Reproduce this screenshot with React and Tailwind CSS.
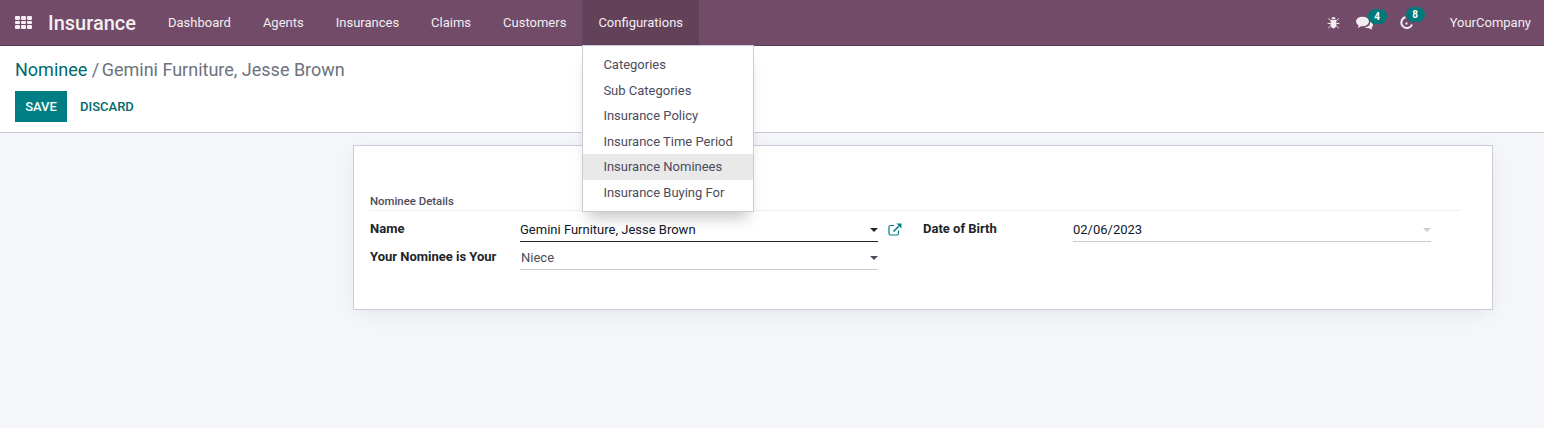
import React from "react";

const menus = ["Dashboard", "Agents", "Insurances", "Claims", "Customers"];
const dropdown = [
  "Categories",
  "Sub Categories",
  "Insurance Policy",
  "Insurance Time Period",
  "Insurance Nominees",
  "Insurance Buying For",
];

// Small caret used at the right of select fields
function Caret({ className }) {
  return <span className={`block w-0 h-0 border-x-[4px] border-x-transparent border-t-[4px] ${className}`} />;
}

function Badge({ children, className }) {
  return (
    <span className={`absolute flex items-center justify-center w-[19px] h-[15px] rounded-full bg-[#00797c] text-white text-[10px] font-bold ${className}`}>
      {children}
    </span>
  );
}

function NavBar() {
  return (
    <header className="relative z-20 flex items-center h-[46px] bg-[#714b67] border-b border-[#5a3c52] text-[#f3eef2] text-[13px]">
      {/* Apps icon */}
      <div className="grid grid-cols-3 gap-x-[1.5px] gap-y-[1px] ml-[15px] w-[17px]">
        {Array.from({ length: 9 }).map((_, i) => (
          <span key={i} className="h-[3.7px] w-[4.6px] rounded-[1px] bg-[#f3eef2]" />
        ))}
      </div>
      <span className="ml-[16px] mr-[16px] text-[20px] font-medium leading-none">Insurance</span>
      {menus.map((m) => (
        <span key={m} className="px-4 leading-[45px]">{m}</span>
      ))}
      {/* Configurations stays open */}
      <div className="relative">
        <span className="block px-4 leading-[45px] bg-[#634259]">Configurations</span>
        <div className="absolute left-0 top-[45px] w-[172px] h-[167px] py-[6px] bg-white border border-[#c9cbd6] shadow-[0_12px_14px_-6px_rgba(0,0,0,0.22)] text-[#4c4c5c]">
          {dropdown.map((d) => (
            <div key={d} className={`h-[25.6px] pl-[20px] leading-[25.6px] ${d === "Insurance Nominees" ? "bg-[#e9e9e9]" : ""}`}>
              {d}
            </div>
          ))}
        </div>
      </div>
      <div className="ml-auto flex items-center">
        {/* Bug icon */}
        <svg width="13" height="13" viewBox="0 0 13 13" fill="#f3eef2" className="mr-[17px]">
          <path d="M4.4 3.2a2.1 2.1 0 0 1 4.2 0z" />
          <path d="M3.6 4h5.8v5c0 2-1.3 3.2-2.9 3.4C4.9 12.2 3.6 11 3.6 9z" />
          <path d="M1.3 2.4l2.2 2.2M11.700 2.4L9.5 4.6M.6 7.500h3M12.4 7.500h-3M1.3 12l2.4-2.2M11.700 12L9.300 9.800" stroke="#f3eef2" strokeWidth="1" fill="none" />
        </svg>
        {/* Chat icon with badge */}
        <div className="relative w-[16px] h-[14px] mr-[27px] ml-[-1px]">
          <svg width="17" height="14" viewBox="0 0 17 14" fill="#f3eef2">
            <ellipse cx="6.500" cy="5.500" rx="6.500" ry="4.800" />
            <path d="M3 8.500L1.800 12 6.500 9.500z" />
            <path d="M14 5.500c1.800.8 3 2 3 3.500 0 1-.6 1.900-1.500 2.500l.8 2.300-3.300-1.600c-1.600.2-3.200-.1-4.300-.9 3.800-.2 5.800-2.700 5.300-5.800z" />
          </svg>
          <Badge className="left-[12px] top-[-7px]">4</Badge>
        </div>
        {/* Activity icon with badge */}
        <div className="relative w-[15px] h-[15px] mr-[36px]">
          <svg width="15" height="15" viewBox="0 0 15 15" fill="none" stroke="#f3eef2" strokeWidth="2">
            <path d="M6.500 2.200A5.500 5.500 0 1 0 13 9.500" />
            <path d="M6.500 8.500h2" />
          </svg>
          <Badge className="left-[7px] top-[-8px]">8</Badge>
        </div>
        <span className="mr-[13px]">YourCompany</span>
      </div>
    </header>
  );
}

function ControlPanel() {
  return (
    <div className="h-[87px] bg-white border-b border-[#c9cbd6] pl-[15px] pt-[12px]">
      <div className="text-[18px] leading-[24px] text-[#6c7280] whitespace-nowrap">
        <span className="text-[#00696c]">Nominee</span> <span className="mr-[-2px]">/</span> Gemini Furniture, Jesse Brown
      </div>
      <div className="flex items-center mt-[9px] text-[13px] font-medium">
        <button className="h-[31px] w-[52px] bg-[#017e84] text-white">SAVE</button>
        <button className="ml-[13px] text-[#00696c]">DISCARD</button>
      </div>
    </div>
  );
}

function Label({ children }) {
  return <div className="text-[13px] font-bold text-[#212529] leading-[20px]">{children}</div>;
}

function NomineeForm() {
  return (
    <div className="ml-[353px] mt-[12px] w-[1140px] h-[165px] bg-white border border-[#c9cbd6] shadow-[0_5px_20px_-5px_rgba(0,0,0,0.1)] pt-[47px] pl-[16px] pr-[31px]">
      <div className="h-[18px] border-b border-[#f0f0f3] text-[11.4px] font-medium leading-[16px] text-[#4c4c5c]">
        Nominee Details
      </div>
      <div className="flex mt-[8px]">
        {/* Left group */}
        <div className="w-[150px]">
          <div className="h-[28px]"><Label>Name</Label></div>
          <Label>Your Nominee is Your</Label>
        </div>
        <div className="w-[358px]">
          <div className="h-[23px] flex items-center justify-between border-b border-[#212529] text-[13px] text-[#111827]">
            <span>Gemini Furniture, Jesse Brown</span>
            <Caret className="border-t-[#212529]" />
          </div>
          <div className="mt-[5px] h-[23px] flex items-center justify-between border-b border-[#c9cbd6] text-[13px] text-[#4c4c5c] pl-[1px]">
            <span>Niece</span>
            <Caret className="border-t-[#4c4c5c]" />
          </div>
        </div>
        {/* External link icon */}
        <svg width="14" height="13" viewBox="0 0 14 13" fill="none" className="ml-[10px] mt-[4px]">
          <path d="M10.500 7.500v3a1.500 1.500 0 0 1-1.500 1.500H2.500A1.500 1.500 0 0 1 1 10.500V4a1.500 1.500 0 0 1 1.500-1.500H6" stroke="#017e84" strokeWidth="1.200" />
          <path d="M5.500 8.500L11 3" stroke="#017e84" strokeWidth="1.600" />
          <path d="M8.500 0.500H13.500V5.500z" fill="#017e84" />
        </svg>
        {/* Right group */}
        <div className="ml-[21px] w-[150px]"><Label>Date of Birth</Label></div>
        <div className="w-[358px] h-[23px] flex items-center justify-between border-b border-[#c9cbd6] text-[13px] text-[#111827]">
          <span>02/06/2023</span>
          <Caret className="border-t-[#c9cbd6]" />
        </div>
      </div>
    </div>
  );
}

export default function App() {
  return (
    <div className="h-[428px] bg-[#f5f6fa] overflow-hidden font-['Roboto',sans-serif]">
      <NavBar />
      <ControlPanel />
      <NomineeForm />
    </div>
  );
}
